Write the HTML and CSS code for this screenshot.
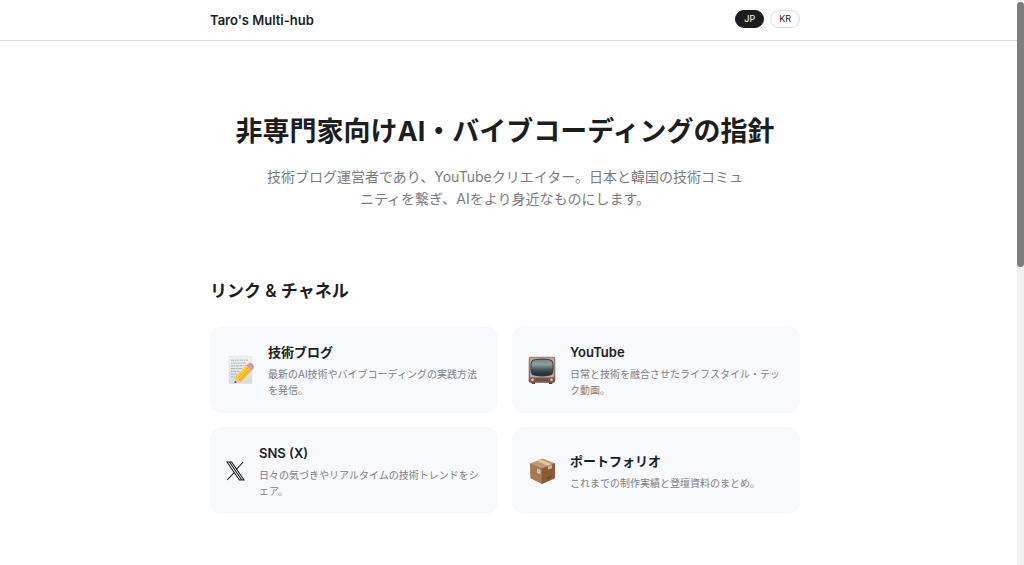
FILE: index.html
```
<!DOCTYPE html>
<html lang="ja">
<head>
  <meta charset="UTF-8">
  <meta name="viewport" content="width=device-width, initial-scale=1.0">
  <title>Taro's Multi-hub</title>
  <link rel="stylesheet" href="styles.css">
</head>
<body>
  <header class="header">
    <div class="container header-inner">
      <div class="logo">Taro's Multi-hub</div>
      <div class="lang-switch">
        <button type="button" class="lang-btn active">JP</button>
        <button type="button" class="lang-btn">KR</button>
      </div>
    </div>
  </header>

  <main class="main">
    <div class="container">
      <section class="hero">
        <h1>非専門家向けAI・バイブコーディングの指針</h1>
        <p>技術ブログ運営者であり、YouTubeクリエイター。日本と韓国の技術コミュニティを繋ぎ、AIをより身近なものにします。</p>
      </section>

      <section class="links">
        <h2>リンク &amp; チャネル</h2>
        <div class="grid">
          <a href="#blog" class="card">
            <svg class="icon" viewBox="0 0 28 28" aria-hidden="true">
              <defs>
                <linearGradient id="paper" x1="0" y1="0" x2="0" y2="1">
                  <stop offset="0" stop-color="#f1f1f0"/>
                  <stop offset="1" stop-color="#d9dadd"/>
                </linearGradient>
                <linearGradient id="pencil" x1="0" y1="0" x2="1" y2="1">
                  <stop offset="0" stop-color="#ffe363"/>
                  <stop offset="0.5" stop-color="#f8c92c"/>
                  <stop offset="1" stop-color="#c78c15"/>
                </linearGradient>
              </defs>
              <path d="M3 .5h23v27H3z" fill="url(#paper)" stroke="#dcdde0" stroke-width=".5"/>
              <g stroke="#97989d" stroke-width=".7" fill="none">
                <path d="M5 4.200h17" stroke-dasharray="3 .7 1.600 .6 2.200 .8"/>
                <path d="M5 7h15" stroke-dasharray="1.500 .6 4 .8 2 .5"/>
                <path d="M5 9.800h17" stroke-dasharray="2.500 .6 1.200 .7 3 .6"/>
                <path d="M5 12.600h12" stroke-dasharray="4 .7 2 .6"/>
                <path d="M5 15.400h9" stroke-dasharray="1.800 .6 3 .6"/>
                <path d="M5 18.200h6M5 21h4" stroke-dasharray="2.600 .6"/>
              </g>
              <path d="M8.500 27l1-6.500 5.500 5z" fill="#e9c79b"/>
              <path d="M8.500 27l.4-2.300 1.900 1.700z" fill="#3d3a38"/>
              <path d="M9.500 20.500L20.300 9.600l5.500 5L15 25.500q-1.500.6-1.900-1-1.700.1-1.700-1.700-1.700-.2-1.900-2.300z" fill="url(#pencil)"/>
              <path d="M11.400 22.600L22.200 11.300M13.200 24.300L24 13" stroke="#d79b19" stroke-width=".5"/>
              <path d="M20.300 9.600l1.500-1.500 5.400 4.900-1.400 1.600z" fill="#a9acb0"/>
              <path d="M21.800 8.100q2.300-2.200 4.700 0 2.400 2.300.7 4.900z" fill="#e58b94"/>
            </svg>
            <div class="card-text">
              <h3>技術ブログ</h3>
              <p>最新のAI技術やバイブコーディングの実践方法を発信。</p>
            </div>
          </a>

          <a href="#youtube" class="card">
            <svg class="icon" viewBox="0 0 28 28" aria-hidden="true">
              <defs>
                <linearGradient id="screen" x1="0" y1="0" x2="0" y2="1">
                  <stop offset="0" stop-color="#6f8184"/>
                  <stop offset="0.3" stop-color="#8ea2a4"/>
                  <stop offset="0.65" stop-color="#435357"/>
                  <stop offset="1" stop-color="#202a2e"/>
                </linearGradient>
                <linearGradient id="wood" x1="0" y1="0" x2="0" y2="1">
                  <stop offset="0" stop-color="#a08070"/>
                  <stop offset="1" stop-color="#76503f"/>
                </linearGradient>
              </defs>
              <path d="M3 26h4v2H4zM21 26h4l-1 2h-3z" fill="#604236"/>
              <rect x=".7" y=".7" width="26.600" height="26" rx="2" fill="url(#wood)"/>
              <rect x="1.800" y="1.800" width="24.400" height="19.600" rx="1.500" fill="#b8aaa2"/>
              <path d="M7 3.200q7-1.200 14 0 4 .6 4.300 4 .5 4.300 0 8.500-.4 3.500-4.300 4.100-7 1.200-14 0-3.900-.6-4.300-4.100-.5-4.200 0-8.500.3-3.400 4.300-4z" fill="#34393a"/>
              <path d="M7.300 4q6.700-1 13.400 0 3.400.5 3.700 3.400.4 4 0 8-.4 3-3.700 3.500-6.700 1-13.400 0-3.300-.5-3.700-3.500-.4-4 0-8 .3-2.900 3.700-3.400z" fill="url(#screen)"/>
              <path d="M1.500 21.800h25v4h-25z" fill="#805a49"/>
              <path d="M8 23h12M8 24.500h12" stroke="#5f4236" stroke-width=".6"/>
              <circle cx="4.500" cy="23.800" r="1.700" fill="#d8c9b9" stroke="#553b31" stroke-width=".5"/>
              <circle cx="23.500" cy="23.800" r="1.700" fill="#d8c9b9" stroke="#553b31" stroke-width=".5"/>
            </svg>
            <div class="card-text">
              <h3>YouTube</h3>
              <p>日常と技術を融合させたライフスタイル・テック動画。</p>
            </div>
          </a>

          <a href="#sns" class="card">
            <svg class="icon icon-x" viewBox="0 0 19 20" aria-hidden="true">
              <path d="M1 1h4.600L18 19h-4.600zM3.700 1.200L15.700 19M17.200 1l-7.100 7.700M1.200 19l7.100-7.700" fill="none" stroke="#1d1d1f" stroke-width="1.100"/>
            </svg>
            <div class="card-text">
              <h3>SNS (X)</h3>
              <p>日々の気づきやリアルタイムの技術トレンドをシェア。</p>
            </div>
          </a>

          <a href="#portfolio" class="card">
            <svg class="icon" viewBox="-1 0 29 28" aria-hidden="true">
              <path d="M1 6.200l12.500 5V27.500L2.500 22Q1.500 21.500 1.400 20.500z" fill="#a97850"/>
              <path d="M13.500 11.200L27 6v14.500q0 1-1 1.500l-12.500 5.500z" fill="#8b5b36"/>
              <path d="M1 6.200L14 1l13 5-13.500 5.200z" fill="#c69a70"/>
              <path d="M8.300 3.300l3.600-1.500 12 5.400-4.200 1.700z" fill="#dfc9ad"/>
              <path d="M19.700 8.900l4.200-1.700v4.200l-1-.2-.9.900-1.100-.2-1.200.8z" fill="#d0b18e"/>
              <path d="M8.500 11.600l3.400 1.400v4.300l-3.400-1.500z" fill="#ded8d0"/>
              <path d="M9.200 13l2 .8M9.200 14.300l2 .8" stroke="#8e8378" stroke-width=".5"/>
              <path d="M18.700 20.800l4.700-1.900v1.700l-4.700 1.900z" fill="#66432b"/>
              <path d="M1 6.200l12.500 5L27 6M13.500 11.200v16.200" fill="none" stroke="#765034" stroke-width=".4"/>
            </svg>
            <div class="card-text">
              <h3>ポートフォリオ</h3>
              <p>これまでの制作実績と登壇資料のまとめ。</p>
            </div>
          </a>
        </div>
      </section>
    </div>
  </main>

  <div class="scrollbar" aria-hidden="true">
    <div class="scrollbar-thumb"></div>
  </div>
</body>
</html>
```
FILE: styles.css
```
* {
  box-sizing: border-box;
  margin: 0;
  padding: 0;
}

body {
  background: #fff;
  color: #1d1d1f;
  font-family: Inter, "Noto Sans CJK JP", sans-serif;
}

.header,
.main {
  padding-right: 14px;
}

.header {
  border-bottom: 1px solid #dcdcde;
}

.container {
  max-width: 590px;
  margin: 0 auto;
}

.header-inner {
  display: flex;
  justify-content: space-between;
  align-items: flex-start;
  padding: 10px 0;
}

.logo {
  font-size: 13px;
  font-weight: 600;
  line-height: 20px;
}

.lang-switch {
  display: flex;
  gap: 6px;
}

.lang-btn {
  height: 18px;
  padding: 0 8px;
  border: 1px solid #dcdcde;
  border-radius: 9px;
  background: #fff;
  color: #1d1d1f;
  font-family: inherit;
  font-size: 9px;
  line-height: 16px;
  cursor: pointer;
}

.lang-btn.active {
  background: #1d1d1f;
  border-color: #1d1d1f;
  color: #fff;
}

.hero {
  padding: 71px 0 69px;
  text-align: center;
}

.hero h1 {
  font-size: 27px;
  font-weight: 700;
  line-height: 40px;
  margin-bottom: 14px;
}

.hero p {
  max-width: 480px;
  margin: 0 auto;
  color: #7b7b80;
  font-size: 14px;
  line-height: 22px;
}

.links h2 {
  font-size: 17px;
  font-weight: 600;
  line-height: 24px;
  margin-bottom: 23px;
}

.grid {
  display: grid;
  grid-template-columns: 1fr 1fr;
  gap: 14px;
}

.card {
  display: flex;
  align-items: center;
  gap: 14px;
  padding: 15px 16px;
  border-radius: 12px;
  background: #f8f9fc;
  color: inherit;
  text-decoration: none;
}

.icon {
  flex-shrink: 0;
  width: 28px;
  height: 28px;
}

.icon-x {
  width: 19px;
  height: 20px;
}

.card h3 {
  font-size: 13px;
  font-weight: 600;
  line-height: 22px;
  margin-bottom: 3px;
}

.card p {
  color: #808085;
  font-size: 10px;
  line-height: 16px;
}

.scrollbar {
  position: fixed;
  top: 0;
  right: 0;
  bottom: 0;
  width: 7px;
  padding-top: 2px;
  background: #f2f2f2;
}

.scrollbar-thumb {
  height: 47%;
  border-radius: 4px;
  background: #7d7d7d;
}

@media (max-width: 600px) {
  .grid {
    grid-template-columns: 1fr;
  }
}
```
